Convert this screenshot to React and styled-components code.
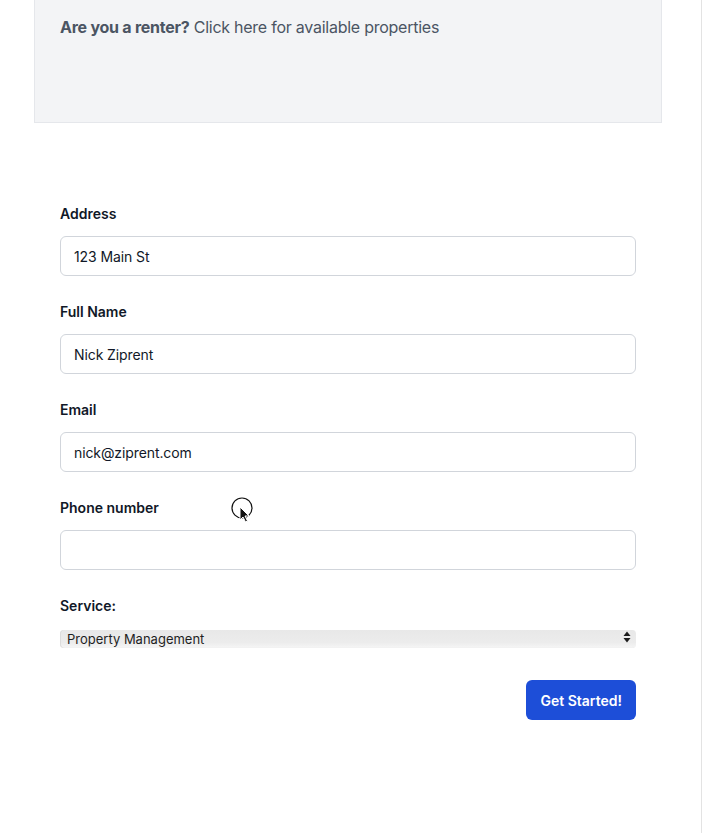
import React from "react";
import styled, { createGlobalStyle } from "styled-components";

const GlobalStyle = createGlobalStyle`
  html, body {
    margin: 0;
    padding: 0;
    background: #ffffff;
  }
  body {
    font-family: Inter, "Noto Sans", "Liberation Sans", sans-serif;
    -webkit-font-smoothing: antialiased;
  }
  * { box-sizing: border-box; }
`;

const Page = styled.div`
  position: relative;
  width: 702px;
  min-height: 833px;
  border-right: 1px solid #e3e3e3;
  background: #ffffff;
`;

const RenterPanel = styled.div`
  margin-left: 34px;
  width: 628px;
  height: 123px;
  padding: 15px 25px;
  background: #f3f4f6;
  border: 1px solid #e5e7eb;
  border-top: none;
  font-size: 16px;
  line-height: 24px;
  letter-spacing: -0.25px;
  color: #4b5563;

  strong {
    font-weight: 700;
  }
`;

const Form = styled.form`
  display: flex;
  flex-direction: column;
  width: 576px;
  margin: 81px 0 0 60px;
`;

const Field = styled.div`
  display: flex;
  flex-direction: column;
  gap: 12px;
  margin-bottom: ${(p) => p.$mb || 26}px;
`;

const Label = styled.label`
  font-size: 14px;
  line-height: 20px;
  font-weight: 600;
  color: #111827;
`;

const Input = styled.input`
  height: 40px;
  width: 100%;
  padding: 0 13px;
  border: 1px solid #d1d5db;
  border-radius: 6px;
  font-family: inherit;
  font-size: 14px;
  letter-spacing: -0.1px;
  color: #111827;
  background: #ffffff;
  outline: none;
`;

const SelectWrap = styled.div`
  position: relative;
  height: 18px;
`;

const Select = styled.select`
  appearance: none;
  width: 100%;
  height: 18px;
  padding: 0 20px 0 7px;
  border: none;
  border-radius: 4px;
  background: linear-gradient(#e8e8e8 0%, #ececec 70%, #f6f6f6 100%);
  box-shadow: inset 1px 0 0 #dcdcdc, inset 0 -1px 0 #f2f2f2;
  font-family: inherit;
  font-size: 13px;
  line-height: 18px;
  color: #1f1f1f;
  outline: none;
`;

const Arrows = styled.svg`
  position: absolute;
  right: 5px;
  top: 3px;
  pointer-events: none;
`;

const Actions = styled.div`
  display: flex;
  justify-content: flex-end;
`;

const Button = styled.button`
  height: 40px;
  padding: 0 14px;
  border: none;
  border-radius: 6px;
  background: #1d4ed8;
  color: #ffffff;
  font-family: inherit;
  font-size: 14px;
  font-weight: 600;
  cursor: pointer;
`;

const Cursor = styled.svg`
  position: absolute;
  left: 229px;
  top: 496px;
`;

const App = () => {
  return (
    <>
      <GlobalStyle />
      <Page>
        <RenterPanel>
          <strong>Are you a renter?</strong> Click here for available properties
        </RenterPanel>
        <Form onSubmit={(e) => e.preventDefault()}>
          <Field>
            <Label>Address</Label>
            <Input defaultValue="123 Main St" />
          </Field>
          <Field>
            <Label>Full Name</Label>
            <Input defaultValue="Nick Ziprent" />
          </Field>
          <Field>
            <Label>Email</Label>
            <Input defaultValue="nick@ziprent.com" />
          </Field>
          <Field>
            <Label>Phone number</Label>
            <Input defaultValue="" />
          </Field>
          <Field $mb={34}>
            <Label>Service:</Label>
            <SelectWrap>
              <Select defaultValue="pm">
                <option value="pm">Property Management</option>
              </Select>
              <Arrows width="8" height="12" viewBox="0 0 8 12">
                <path d="M4 0.5 L7.5 5 H0.5 Z" fill="#1a1a1a" />
                <path d="M4 11.5 L7.5 7 H0.5 Z" fill="#1a1a1a" />
              </Arrows>
            </SelectWrap>
          </Field>
          <Actions>
            <Button type="submit">Get Started!</Button>
          </Actions>
        </Form>
        <Cursor width="28" height="30" viewBox="0 0 28 30">
          <circle cx="13" cy="12" r="10" fill="none" stroke="#111" strokeWidth="1.2" />
          <path
            d="M11 11 L11 24 L14 21 L16.5 26 L18.5 25 L16 20 L20 20 Z"
            fill="#111"
            stroke="#fff"
            strokeWidth="1"
          />
        </Cursor>
      </Page>
    </>
  );
};

export default App;
